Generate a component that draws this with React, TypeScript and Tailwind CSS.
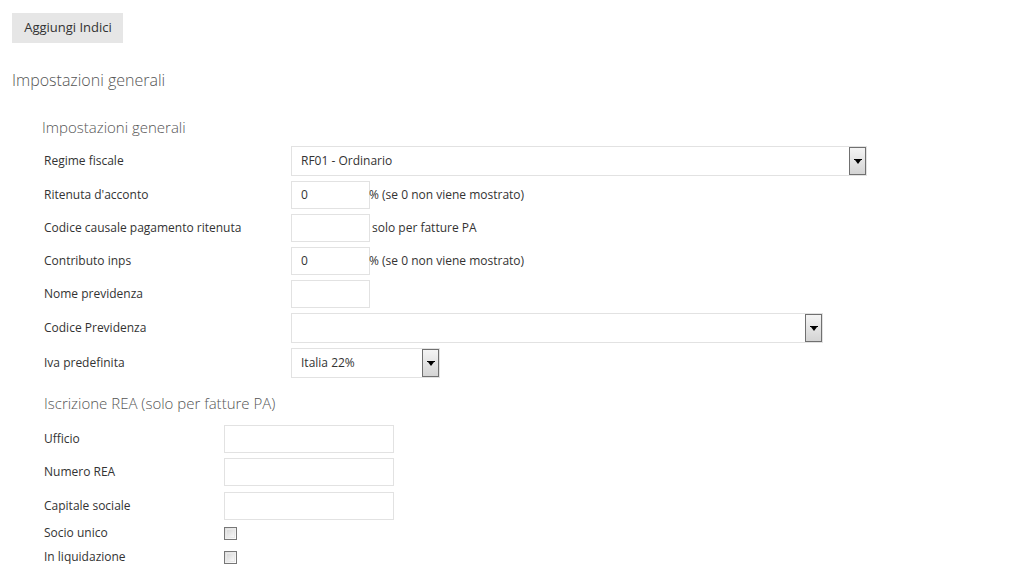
import React from "react";

const font = { fontFamily: '"Open Sans", "Liberation Sans", sans-serif' };

function Arrow() {
  return (
    <div className="w-[17px] h-full border border-[#707070] bg-gradient-to-b from-[#f4f4f4] to-[#d4d4d4] flex items-center justify-center shrink-0">
      <svg width="8" height="5" viewBox="0 0 8 5">
        <rect x="0" y="0" width="8" height="1" fill="#000" />
        <polygon points="1,1 7,1 4,5" fill="#000" />
      </svg>
    </div>
  );
}

function Select({ w, value }: { w: string; value: string }) {
  return (
    <div className={`${w} h-[30px] border border-[#e2e2e2] bg-white flex items-stretch`}>
      <div className="flex-1 flex items-center pl-[9px] text-[12px] text-[#333]">{value}</div>
      <Arrow />
    </div>
  );
}

function Input({ value, w = "w-[79px]" }: { value?: string; w?: string }) {
  return (
    <div className={`${w} h-[28px] border border-[#e2e2e2] bg-white flex items-center pl-[9px] text-[12px] text-[#333]`}>
      {value}
    </div>
  );
}

function Row({ label, children, h = "h-[28px]", lw = "w-[247px]" }: { label: string; children: React.ReactNode; h?: string; lw?: string }) {
  return (
    <div className={`flex items-center ${h}`}>
      <div className={`${lw} shrink-0 text-[12px] text-[#333]`}>{label}</div>
      {children}
    </div>
  );
}

function Checkbox() {
  return (
    <div className="w-[13px] h-[13px] border border-[#777] bg-gradient-to-br from-[#dcdcdc] to-[#ffffff] p-[1px]">
      <div className="w-full h-full border border-[#e8e8e8] bg-gradient-to-br from-[#d8d8d8] to-[#f8f8f8]" />
    </div>
  );
}

export default function App() {
  return (
    <div style={font} className="w-[1022px] h-[576px] bg-white overflow-hidden px-[12px] pt-[13px]">
      <button className="h-[30px] w-[111px] bg-[#e6e6e6] text-[13px] text-[#333] flex items-center justify-center pl-[1px]">
        Aggiungi Indici
      </button>
      <div className="mt-[25px] text-[16px] font-light text-[#555] leading-[24px]">Impostazioni generali</div>
      <div className="pl-[30px]">
        <div className="mt-[24px] text-[15px] font-light text-[#555] leading-[22px]">Impostazioni generali</div>
        <div className="pl-[2px] mt-[8px] flex flex-col gap-[5px]">
          <Row label="Regime fiscale" h="h-[30px]">
            <Select w="w-[576px]" value="RF01 - Ordinario" />
          </Row>
          <Row label="Ritenuta d'acconto">
            <Input value="0" />
            <span className="text-[12px] text-[#333] ml-[-1px]">% (se 0 non viene mostrato)</span>
          </Row>
          <Row label="Codice causale pagamento ritenuta">
            <Input />
            <span className="text-[12px] text-[#333] ml-[2px]">solo per fatture PA</span>
          </Row>
          <Row label="Contributo inps">
            <Input value="0" />
            <span className="text-[12px] text-[#333] ml-[-1px]">% (se 0 non viene mostrato)</span>
          </Row>
          <Row label="Nome previdenza">
            <Input />
          </Row>
          <Row label="Codice Previdenza" h="h-[30px]">
            <Select w="w-[532px]" value="" />
          </Row>
          <Row label="Iva predefinita" h="h-[30px]">
            <Select w="w-[149px]" value="Italia 22%" />
          </Row>
        </div>
        <div className="pl-[2px] mt-[14px] text-[15px] font-light text-[#555] leading-[22px]">Iscrizione REA (solo per fatture PA)</div>
        <div className="pl-[2px] mt-[11px] flex flex-col gap-[5px]">
          <Row label="Ufficio" lw="w-[180px]">
            <Input w="w-[170px]" />
          </Row>
          <Row label="Numero REA" lw="w-[180px]">
            <Input w="w-[170px]" />
          </Row>
          <Row label="Capitale sociale" lw="w-[180px]" h="h-[29px]">
            <Input w="w-[170px]" />
          </Row>
        </div>
        <div className="pl-[2px] mt-[1px] flex flex-col">
          <Row label="Socio unico" lw="w-[180px]" h="h-[24px]">
            <Checkbox />
          </Row>
          <Row label="In liquidazione" lw="w-[180px]" h="h-[24px]">
            <Checkbox />
          </Row>
        </div>
      </div>
    </div>
  );
}
